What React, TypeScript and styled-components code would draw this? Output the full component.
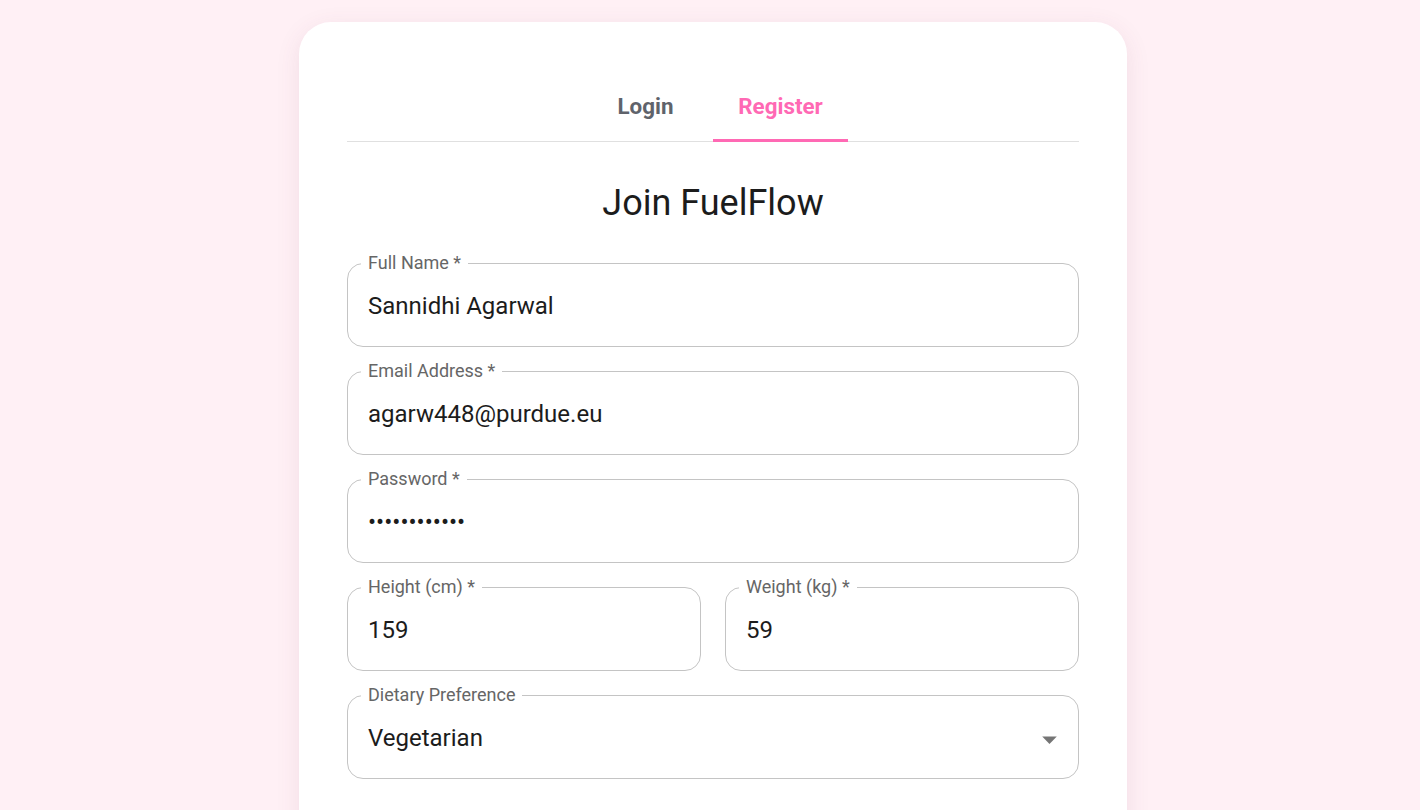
import React, { useState } from "react";
import styled, { createGlobalStyle } from "styled-components";

const PINK = "#ff69b4";

const GlobalStyle = createGlobalStyle`
  html, body {
    margin: 0;
    padding: 0;
    background: #fff0f5;
    font-family: Roboto, "Liberation Sans", Arial, sans-serif;
  }
  html::-webkit-scrollbar {
    display: none;
  }
  * {
    box-sizing: border-box;
  }
`;

const Page = styled.div`
  min-height: 100vh;
  display: flex;
  justify-content: center;
  padding: 22px 0 40px 6px;
`;

const Card = styled.div`
  width: 828px;
  background: #ffffff;
  border-radius: 32px;
  padding: 48px 48px 120px;
  box-shadow: 0 6px 24px rgba(120, 60, 90, 0.1);
`;

const TabList = styled.div`
  position: relative;
  display: flex;
  justify-content: center;
  height: 72px;
  border-bottom: 1px solid #e0e0e0;
`;

const Tab = styled.button<{ $active?: boolean }>`
  position: relative;
  width: 135px;
  height: 71px;
  border: 0;
  background: transparent;
  padding: 0;
  font-family: Roboto, "Liberation Sans", Arial, sans-serif;
  font-size: 22.4px;
  font-weight: 700;
  color: ${(p) => (p.$active ? PINK : "#5f636b")};
  cursor: pointer;

  &::after {
    content: "";
    display: ${(p) => (p.$active ? "block" : "none")};
    position: absolute;
    left: 0;
    right: 0;
    bottom: -1px;
    height: 3px;
    background: ${PINK};
  }
`;

const Title = styled.h1`
  margin: 39px 0 30px;
  text-align: center;
  font-size: 36px;
  line-height: 44px;
  font-weight: 400;
  color: #1c1c1c;
`;

const Form = styled.form`
  display: flex;
  flex-direction: column;
  gap: 16px;
`;

const Row = styled.div`
  display: grid;
  grid-template-columns: 1fr 1fr;
  gap: 24px;
`;

const Field = styled.fieldset`
  margin: 0;
  min-width: 0;
  height: 92px;
  padding: 0 11px 0 13px;
  border: 1px solid #c4c4c4;
  border-radius: 16px;
`;

const Legend = styled.legend`
  padding: 0 7px;
  font-size: 18px;
  line-height: 16px;
  color: #666666;
  white-space: nowrap;
`;

const Input = styled.input`
  display: block;
  width: 100%;
  height: 44px;
  margin-top: 13px;
  padding: 0 0 0 7px;
  border: 0;
  outline: none;
  background: transparent;
  font-family: Roboto, "Liberation Sans", Arial, sans-serif;
  font-size: 24px;
  color: #1c1c1c;
`;

const SelectBox = styled.div`
  display: flex;
  align-items: center;
  justify-content: space-between;
  height: 44px;
  margin-top: 13px;
  padding-left: 7px;
  font-size: 24px;
  color: #1c1c1c;
  cursor: pointer;
`;

const Arrow = styled.svg`
  width: 35px;
  height: 35px;
  margin-top: 3px;
  fill: rgba(0, 0, 0, 0.54);
`;

type FieldProps = {
  label: string;
  value: string;
  type?: string;
};

const TextField: React.FC<FieldProps> = ({ label, value, type = "text" }) => (
  <Field>
    <Legend>{label}</Legend>
    <Input type={type} defaultValue={value} />
  </Field>
);

export default function App() {
  const [tab, setTab] = useState<"login" | "register">("register");

  return (
    <>
      <GlobalStyle />
      <Page>
        <Card>
          <TabList>
            <Tab $active={tab === "login"} onClick={() => setTab("login")}>
              Login
            </Tab>
            <Tab $active={tab === "register"} onClick={() => setTab("register")}>
              Register
            </Tab>
          </TabList>

          <Title>Join FuelFlow</Title>

          <Form onSubmit={(e) => e.preventDefault()}>
            <TextField label="Full Name *" value="Sannidhi Agarwal" />
            <TextField label="Email Address *" value="agarw448@purdue.eu" type="email" />
            <TextField label="Password *" value="sannidhi1234" type="password" />
            <Row>
              <TextField label="Height (cm) *" value="159" />
              <TextField label="Weight (kg) *" value="59" />
            </Row>
            <Field>
              <Legend>Dietary Preference</Legend>
              <SelectBox>
                <span>Vegetarian</span>
                <Arrow viewBox="0 0 24 24">
                  <path d="M7 10l5 5 5-5z" />
                </Arrow>
              </SelectBox>
            </Field>
          </Form>
        </Card>
      </Page>
    </>
  );
}
